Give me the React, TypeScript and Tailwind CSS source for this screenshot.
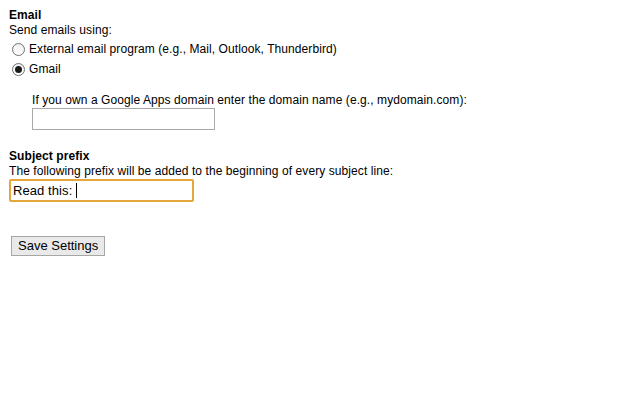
import React from 'react';

function Radio({ checked }: { checked?: boolean }) {
  return (
    <span className="flex h-[13px] w-[13px] shrink-0 items-center justify-center rounded-full border border-[#707070] bg-gradient-to-b from-[#f0f0f0] to-white">
      {checked && <span className="h-[7px] w-[7px] rounded-full bg-[#1a1a1a]" />}
    </span>
  );
}

export default function App() {
  return (
    <div className="min-h-screen bg-white pl-[9px] pt-[8px] text-[12px] leading-[15px] tracking-[0.08px] text-black [font-family:'Liberation_Sans',Arial,sans-serif]">
      <div className="font-bold">Email</div>
      <div>Send emails using:</div>
      <label className="mt-[2px] flex h-[18px] items-center gap-[4px] pl-[3px]">
        <Radio />
        <span>External email program (e.g., Mail, Outlook, Thunderbird)</span>
      </label>
      <label className="mt-[2px] flex h-[18px] items-center gap-[4px] pl-[3px]">
        <Radio checked />
        <span>Gmail</span>
      </label>

      <div className="ml-[23px] mt-[15px]">
        <div>If you own a Google Apps domain enter the domain name (e.g., mydomain.com):</div>
        <div className="h-[22px] w-[183px] border border-[#a9a9a9] bg-white" />
      </div>

      <div className="mt-[19px] font-bold">Subject prefix</div>
      <div>The following prefix will be added to the beginning of every subject line:</div>
      <div className="flex h-[23px] w-[185px] items-center rounded-[2px] border-2 border-[#e5a63d] pl-[2px] text-[13px]">
        <span>Read this:&nbsp;</span>
        <span className="h-[15px] w-px bg-black" />
      </div>

      <button className="ml-[2px] mt-[34px] h-[20px] border border-[#a6a6a6] bg-[#e9e9e9] px-[6px] text-[13px] leading-[18px] tracking-normal text-black">
        Save Settings
      </button>
    </div>
  );
}
